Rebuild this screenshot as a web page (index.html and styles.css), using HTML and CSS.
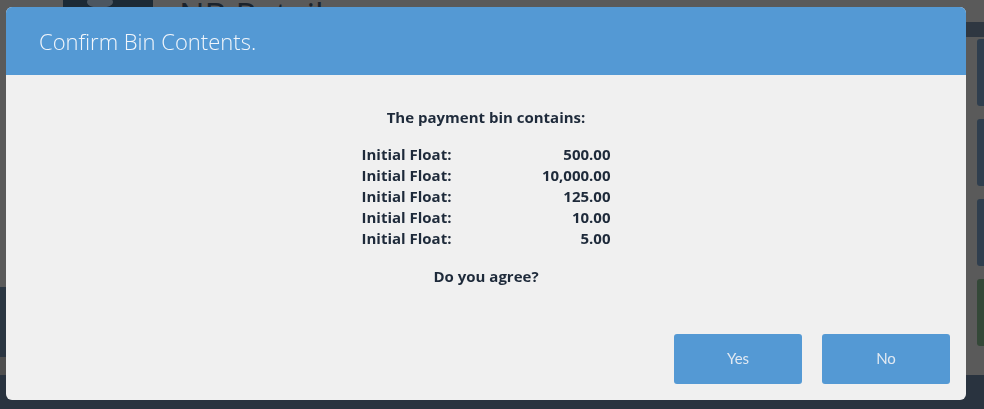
FILE: index.html
```html
<!DOCTYPE html>
<html lang="en">
<head>
<meta charset="utf-8">
<title>Confirm Bin Contents</title>
<link rel="stylesheet" href="styles.css">
</head>
<body>
<div class="app">
  <div class="app-top">
    <div class="app-logo"><span class="app-logo-dot"></span></div>
    <div class="app-brand">NB Retail</div>
    <div class="app-top-right"></div>
  </div>
  <div class="app-main">
    <div class="app-left">
      <div class="app-left-space"></div>
      <div class="app-left-band"></div>
      <div class="app-left-gap"></div>
    </div>
    <div class="app-right">
      <div class="app-card"></div>
      <div class="app-card"></div>
      <div class="app-card"></div>
      <div class="app-card app-card-green"></div>
    </div>
  </div>
  <div class="app-bottom"></div>
</div>

<div class="overlay">
  <div class="modal" role="dialog" aria-labelledby="modal-title">
    <div class="modal-header">
      <h1 class="modal-title" id="modal-title">Confirm Bin Contents.</h1>
    </div>
    <div class="modal-body">
      <p class="lead">The payment bin contains:</p>
      <div class="amounts">
        <div class="amount-row"><span>Initial Float:</span><span>500.00</span></div>
        <div class="amount-row"><span>Initial Float:</span><span>10,000.00</span></div>
        <div class="amount-row"><span>Initial Float:</span><span>125.00</span></div>
        <div class="amount-row"><span>Initial Float:</span><span>10.00</span></div>
        <div class="amount-row"><span>Initial Float:</span><span>5.00</span></div>
      </div>
      <p class="question">Do you agree?</p>
    </div>
    <div class="modal-footer">
      <button class="btn" type="button">Yes</button>
      <button class="btn" type="button">No</button>
    </div>
  </div>
</div>
</body>
</html>
```

FILE: styles.css
```css
* { box-sizing: border-box; }

html, body {
  margin: 0;
  padding: 0;
  width: 984px;
  height: 409px;
  overflow: hidden;
}

body {
  background: #585858;
  font-family: "Open Sans", "Noto Sans", sans-serif;
}

/* Dimmed application behind the dialog */
.app {
  display: flex;
  flex-direction: column;
  height: 409px;
  background: #5a5a5a;
}

.app-top {
  display: flex;
  align-items: flex-start;
  height: 22px;
  flex: none;
}

.app-logo {
  margin-left: 63px;
  width: 90px;
  height: 8px;
  background: #1c2a36;
  display: flex;
  padding-left: 24px;
}

.app-logo-dot {
  width: 26px;
  height: 12px;
  border-radius: 0 0 13px 13px;
  background: #4c5660;
  margin-top: -4px;
  border-radius: 50%;
}

.app-brand {
  margin-left: 26px;
  font-size: 34px;
  color: #1b232c;
  line-height: 30px;
}

.app-top-right { flex: 1; }

.app-main {
  flex: 1;
  display: flex;
  justify-content: space-between;
}

.app-left {
  width: 20px;
  display: flex;
  flex-direction: column;
}

.app-left-space { height: 265px; }
.app-left-band { height: 70px; background: #2b3642; }
.app-left-gap { flex: 1; background: #4f4f4f; }

.app-right {
  width: 20px;
  display: flex;
  flex-direction: column;
  gap: 13px;
  padding-top: 2px;
  border-top: 15px solid #2f3741;
  align-items: flex-end;
}

.app-card {
  width: 7px;
  height: 67px;
  background: #2f3e4e;
  border-radius: 3px 0 0 3px;
}

.app-card-green { background: #344838; }

.app-bottom {
  height: 34px;
  flex: none;
  background: #29333f;
}

/* Overlay + dialog */
.overlay {
  position: fixed;
  inset: 0;
  padding: 7px 0 0 6px;
}

.modal {
  width: 960px;
  height: 393px;
  background: #f0f0f0;
  border-radius: 6px;
  overflow: hidden;
  display: flex;
  flex-direction: column;
}

.modal-header {
  height: 68px;
  flex: none;
  background: #5499d4;
  display: flex;
  align-items: center;
  padding-left: 33px;
}

.modal-title {
  margin: 0;
  font-family: "Open Sans", "Noto Sans", sans-serif;
  font-weight: 300;
  font-size: 22px;
  color: #f2f6fb;
}

.modal-body {
  flex: 1;
  display: flex;
  flex-direction: column;
  align-items: center;
  padding-top: 32px;
  color: #1e2a3a;
  font-weight: 700;
  font-size: 15px;
  line-height: 21px;
}

.lead, .question {
  margin: 0;
  text-align: center;
}

.amounts {
  width: 249px;
  margin: 16px 0 17px;
  display: flex;
  flex-direction: column;
}

.amount-row {
  display: flex;
  justify-content: space-between;
}

.modal-footer {
  display: flex;
  justify-content: flex-end;
  gap: 20px;
  padding: 0 16px 16px 0;
}

.btn {
  width: 128px;
  height: 50px;
  border: 0;
  border-radius: 3px;
  background: #5499d4;
  color: #e1e9f2;
  font-family: Lato, "Open Sans", sans-serif;
  font-size: 15px;
  padding: 0 0 3px;
}
```
